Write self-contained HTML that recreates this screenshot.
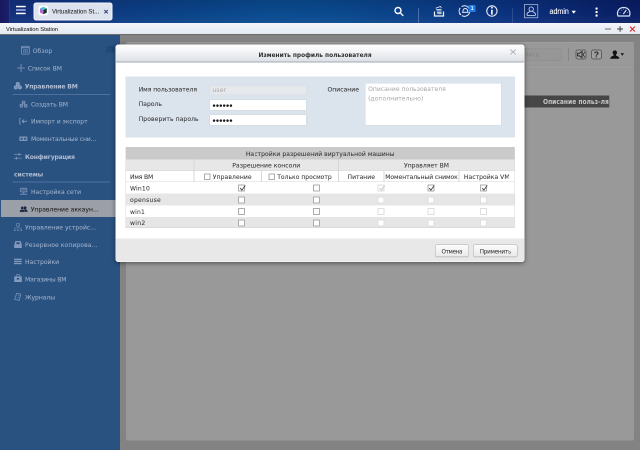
<!DOCTYPE html>
<html lang="ru">
<head>
<meta charset="utf-8">
<title>Virtualization Station</title>
<style>
html,body{margin:0;padding:0;}
body{width:640px;height:450px;overflow:hidden;position:relative;background:#838383;}
#app{position:absolute;left:0;top:0;width:1280px;height:900px;overflow:hidden;will-change:transform;transform:scale(0.5);transform-origin:0 0;background:#838383;font-family:"DejaVu Sans","Liberation Sans",sans-serif;font-size:12px;color:#3e3e3e;-webkit-text-stroke:0.1px;}
*{box-sizing:border-box;}
svg{position:absolute;overflow:visible;}
/* top bar */
#topbar{position:absolute;left:0;top:0;width:1280px;height:45.6px;background:linear-gradient(rgba(0,0,20,.12),rgba(0,0,0,0) 60%,rgba(255,255,255,.04)),linear-gradient(90deg,#14307c 0%,#12327e 6%,#0d3c83 18%,#0a4489 30%,#0a4b8f 42%,#0a4a8e 52%,#0b4289 62%,#0b3a84 70%,#0b317e 80%,#0a2770 90%,#0a1d64 100%);}
#corner{position:absolute;left:0;top:0;width:20px;height:45.6px;background:linear-gradient(90deg,#17175e,#1b2169);border-right:1px solid #3a4a96;}
#tab{position:absolute;left:67px;top:5px;width:158px;height:36px;border-radius:5px;background:#dde3ee;border:2px solid #f0f3f9;}
#tab span{position:absolute;left:35.4px;top:7.6px;white-space:nowrap;font-family:"Liberation Sans",sans-serif;font-size:12.8px;color:#222;}
.vsep{position:absolute;top:16px;width:1.6px;height:30px;background:rgba(150,170,220,.45);}
#admin{position:absolute;left:1099.4px;top:14px;font-family:"Liberation Sans",sans-serif;font-size:15.6px;color:#fff;white-space:nowrap;-webkit-text-stroke:0.2px #fff;}
#badge{position:absolute;left:937.2px;top:9.6px;width:14.2px;height:14.6px;background:#1e7be8;color:#eef4ff;font-family:"Liberation Sans",sans-serif;font-weight:bold;font-size:10.4px;line-height:14px;text-align:center;-webkit-text-stroke:0;}
/* title bar */
#titlebar{position:absolute;left:0;top:45.6px;width:1280px;height:24.4px;background:linear-gradient(#f3f6fa,#e4eaf2);border-bottom:2.4px solid #6c6c6c;}
#titlebar span{position:absolute;left:11.6px;top:5.8px;font-family:"Liberation Sans",sans-serif;font-size:11.6px;color:#222;white-space:nowrap;}
/* sidebar */
#sidebar{position:absolute;left:0;top:70px;width:240px;height:830px;background:#295280;}
.si{position:absolute;left:0;width:240px;height:30px;line-height:30px;color:#9fb0ca;white-space:nowrap;font-size:12.2px;}
.si span{position:absolute;top:0;}
.si.b{font-weight:bold;color:#b0bdd4;-webkit-text-stroke:0;}
#selrow{position:absolute;left:2px;top:330.2px;width:238px;height:33.8px;background:#9b9fa7;}
.sep{position:absolute;left:25.4px;width:195px;height:1.6px;background:#4d719f;}
/* main */
#mainpanel{position:absolute;left:252px;top:84.4px;width:1016px;height:798px;background:#999;border-radius:4px;border-bottom:2px solid #8e8e8e;border-top:1px solid #a3a3a3;}
#tbline{position:absolute;left:0;top:45.2px;width:100%;height:2px;background:#8f8f8f;border-bottom:1px solid #a0a0a0;}
#darkbar{position:absolute;left:0;top:105.6px;width:967.2px;height:23.6px;background:#464646;border-right:1.6px solid #6e6e6e;}
#darkbar span{position:absolute;left:834px;top:1.4px;line-height:24.8px;font-weight:bold;font-size:13.4px;color:#c6c6c6;white-space:nowrap;-webkit-text-stroke:0;}
.tbox{position:absolute;top:14px;height:20px;border:2px solid #5e5e5e;border-radius:4.8px;background:#a1a1a1;}
/* dialog */
#dlg{position:absolute;left:230.6px;top:88.6px;width:818.6px;height:435.6px;background:#fff;border-radius:6px;box-shadow:0 2px 10px rgba(0,0,0,.5);}
#dlg:after{content:"";position:absolute;left:0;top:0;right:0;bottom:0;border:1px solid rgba(255,255,255,.9);border-radius:6px;pointer-events:none;}
#dlgtitle{position:absolute;left:0;top:0;width:100%;height:36.8px;border-radius:6px 6px 0 0;background:linear-gradient(#ffffff,#f1f3f5 45%,#dce0e5);border-bottom:2px solid #a3a9b0;font-weight:bold;font-size:13px;line-height:39.2px;color:#303030;-webkit-text-stroke:0;}
#dlgfoot{position:absolute;left:0;top:388px;width:100%;height:47.6px;border-radius:0 0 6px 6px;background:#e8e8e8;}
.btn{position:absolute;top:12px;height:25.2px;border:1.6px solid #adadad;border-radius:4px;background:linear-gradient(#fcfcfc,#e9e9e9);text-align:center;line-height:26px;font-size:11.4px;color:#3a3a3a;box-shadow:0 1px 1px rgba(0,0,0,.12);}
#form{position:absolute;left:20.4px;top:64px;width:778.6px;height:122.8px;background:#dbe3ec;}
.lbl{position:absolute;font-size:12.1px;color:#333;white-space:nowrap;line-height:20px;}
.inp{position:absolute;left:167.6px;width:194.4px;height:21.6px;background:#fff;font-size:12px;line-height:20px;padding-left:5.2px;color:#111;border:1.2px solid #cfd6de;border-radius:2px;white-space:nowrap;}
.inp .pw{font-size:6.6px;letter-spacing:1px;position:absolute;left:5.6px;top:0.8px;color:#1c1c1c;-webkit-text-stroke:0;}
.inp.dis{background:#e6e9ec;color:#aaa;border-color:#d8dde3;height:19.2px;line-height:16.4px;}
#ta{position:absolute;left:479px;top:13px;width:273px;height:85px;background:#fff;border:1px solid #d3d9e0;color:#a6a6a6;font-size:12.1px;line-height:19.5px;padding:2.4px 5.2px;white-space:nowrap;-webkit-text-stroke:0;}
/* table */
#tbl{position:absolute;left:20.4px;top:207px;width:778.8px;height:160.4px;font-size:12.1px;color:#333;background:#fff;}
.row{position:absolute;left:0;width:778.8px;padding-top:1.2px;}
.c{position:absolute;top:1.2px;height:100%;white-space:nowrap;text-align:center;}
.vl{position:absolute;width:1.4px;background:#d6d6d6;}
.cb{position:absolute;width:14px;height:14px;border:2px solid #ababab;background:#fff;border-radius:1.2px;}
.cb.f{border-color:#dedede;}
</style>
</head>
<body>
<div id="app">
<div id="topbar">
  <div id="corner"></div>
  <div id="tab"><span style="transform:scaleX(0.9501);transform-origin:0 50%;">Virtualization St...</span></div>
  <div class="vsep" style="left:836.4px"></div>
  <div class="vsep" style="left:1024.8px"></div>
  <div id="admin" style="transform:scaleX(0.9133);transform-origin:0 50%;">admin</div>
  <svg id="topsvg" style="left:0;top:0" width="1280" height="46" viewBox="0 0 640 23">
    <!-- hamburger -->
    <rect x="16" y="5.8" width="9.7" height="1.5" fill="#fff"/>
    <rect x="16" y="9.25" width="9.7" height="1.5" fill="#a9b4f0"/>
    <rect x="16" y="12.7" width="9.7" height="1.5" fill="#fff"/>
    <!-- tab icon -->
    <rect x="38.6" y="5.6" width="9.6" height="9.8" rx="2" fill="#fdfdfd"/>
    <polygon points="43.4,6.9 46.8,8.4 43.4,10 40,8.4" fill="#35c6d8"/>
    <polygon points="40,8.4 43.4,10 43.4,14.2 40,12.6" fill="#b06bd0"/>
    <polygon points="46.8,8.4 43.4,10 43.4,14.2 46.8,12.6" fill="#16352a"/>
    <!-- tab close -->
    <path d="M104.4 10 L107.8 13.4 M107.8 10 L104.4 13.4" stroke="#364a7c" stroke-width="1.15" fill="none"/>
    <!-- search -->
    <circle cx="398" cy="10.5" r="3" fill="none" stroke="#fff" stroke-width="1.4"/>
    <path d="M400.6 13.1 L402.9 15.5" stroke="#eef2fb" stroke-width="1.4" stroke-linecap="round"/>
    <!-- stack/tray -->
    <path d="M434.5 11.5 V16 H443.5 V11.5" fill="none" stroke="#eef1fa" stroke-width="1.25"/>
    <path d="M437.4 13.7 H441.6 M437 12.3 H441.6 M436.6 10.9 H441.6 M436.2 9.5 L441.5 9.3 M435.6 8.2 L440.4 6.5 L441.5 7.9" fill="none" stroke="#e6ebf8" stroke-width="0.8"/>
    <!-- refresh circle with bell -->
    <path d="M461.6 6.6 A5.3 5.3 0 1 1 461.8 15.6" fill="none" stroke="#e4e9f6" stroke-width="1.05"/>
    <path d="M460.2 14.2 A5.3 5.3 0 0 1 460.2 7.8" fill="none" stroke="#e4e9f6" stroke-width="1.05"/>
    <circle cx="460.3" cy="14.3" r="0.8" fill="#fff"/>
    <path d="M462 12.3 H468.6" fill="none" stroke="#e4e9f6" stroke-width="1"/>
    <path d="M462.9 12 C462.9 10.2 463.3 8.5 465.3 8.5 C467.3 8.5 467.7 10.2 467.7 12" fill="none" stroke="#e4e9f6" stroke-width="0.9"/>
    <!-- info -->
    <circle cx="491.9" cy="11" r="5.15" fill="none" stroke="#e4e9f6" stroke-width="1.1"/>
    <rect x="491.1" y="9.7" width="1.6" height="4.9" fill="#fff"/>
    <rect x="491.1" y="6.8" width="1.6" height="1.7" fill="#fff"/>
    <!-- user box -->
    <rect x="524.4" y="4.5" width="13.4" height="13.3" fill="none" stroke="#b9c5e2" stroke-width="0.7"/>
    <circle cx="531.2" cy="9.1" r="2.2" fill="none" stroke="#dfe5f5" stroke-width="0.8"/>
    <path d="M527 15.4 V14.2 C527 12.6 529 12.2 530 11.4 M535.4 15.4 V14.2 C535.4 12.6 533.4 12.2 532.4 11.4 M527 15.4 H535.4" fill="none" stroke="#dfe5f5" stroke-width="0.8"/>
    <!-- caret -->
    <polygon points="571.6,10.7 575.9,10.7 573.75,13.7" fill="#fff"/>
    <!-- dots -->
    <rect x="595.5" y="7.5" width="2.1" height="2.1" rx="0.6" fill="#fff"/>
    <rect x="595.5" y="11" width="2.1" height="2.1" rx="0.6" fill="#fff"/>
    <rect x="595.5" y="14.5" width="2.1" height="2.1" rx="0.6" fill="#fff"/>
    <!-- gauge -->
    <path d="M618 16 C616.4 12 618.6 7.5 623.7 7.5 C628.8 7.5 631 12 629.4 16 Z" fill="none" stroke="#dde3f4" stroke-width="1.2"/>
    <path d="M623.3 14 L626.3 10" stroke="#dde3f4" stroke-width="1.1"/>
    <path d="M619.6 12.6 L620.6 12.9 M621.2 9.8 L621.9 10.5 M623.7 8.8 V9.6 M627.8 12.6 L626.9 12.9" stroke="#cfd6ee" stroke-width="0.6"/>
  </svg>
  <div id="badge">1</div>
</div>
<div id="titlebar"><span style="transform:scaleX(0.9878);transform-origin:0 50%;">Virtualization Station</span>
  <svg style="left:0;top:0" width="1280" height="24" viewBox="0 22.8 640 12">
    <rect x="605" y="28.2" width="6" height="1.2" fill="#838383"/>
    <path d="M617.2 28.8 H623 M620.1 26 V31.6" stroke="#585858" stroke-width="1.2"/>
    <path d="M630 26.4 L634.9 31.3 M634.9 26.4 L630 31.3" stroke="#d62a2a" stroke-width="1.15"/>
  </svg>
</div>
<div id="sidebar">
  <div id="selrow"></div>
  <div class="sep" style="top:118px"></div>
  <div class="sep" style="top:293.2px"></div>
  <div class="si" style="top:16.6px"><span style="letter-spacing:0.08px;left:65.4px">Обзор</span></div>
  <div class="si" style="top:51.8px"><span style="letter-spacing:-0.008px;left:55.4px">Список ВМ</span></div>
  <div class="si b" style="top:87.8px"><span style="letter-spacing:-0.366px;left:49.4px">Управление ВМ</span></div>
  <div class="si" style="top:123.8px"><span style="letter-spacing:-0.138px;left:62px">Создать ВМ</span></div>
  <div class="si" style="top:158.4px"><span style="letter-spacing:-0.13px;left:62px">Импорт и экспорт</span></div>
  <div class="si" style="top:193.2px"><span style="letter-spacing:-0.282px;left:62px">Моментальные сни...</span></div>
  <div class="si b" style="top:228.6px"><span style="letter-spacing:-0.388px;left:50px">Конфигурация</span></div>
  <div class="si b" style="top:264.4px"><span style="letter-spacing:-0.188px;left:28px">системы</span></div>
  <div class="si" style="top:299.2px"><span style="letter-spacing:-0.106px;left:62px">Настройка сети</span></div>
  <div class="si" style="top:334.4px;color:#1c1c1c"><span style="letter-spacing:-0.04px;left:61.4px">Управление аккаун...</span></div>
  <div class="si" style="top:370.4px"><span style="letter-spacing:-0.038px;left:50px">Управление устройс...</span></div>
  <div class="si" style="top:404.6px"><span style="letter-spacing:0.108px;left:50px">Резервное копирова...</span></div>
  <div class="si" style="top:439.2px"><span style="letter-spacing:-0.094px;left:50px">Настройки</span></div>
  <div class="si" style="top:474.4px"><span style="letter-spacing:-0.364px;left:50px">Магазины ВМ</span></div>
  <div class="si" style="top:509.8px"><span style="letter-spacing:-0.134px;left:50px">Журналы</span></div>
  <svg style="left:0;top:0" width="240" height="830" viewBox="0 35 120 415" fill="none" stroke="#8198bd" stroke-width="0.8">
    <!-- collapse btn -->
    <rect x="106.5" y="46" width="8" height="6.5" fill="#1f4677" stroke="none"/>
    <path d="M108 46.6 V52 M110.2 46.6 V52" stroke="#2a5283" stroke-width="0.7"/>
    <!-- overview -->
    <rect x="21.4" y="46.3" width="7.9" height="7.8" rx="1" stroke-width="0.75"/>
    <path d="M21.4 47.7 H29.3" stroke-width="1"/>
    <path d="M23.3 49.6 H27.5 V52.4 H23.3 Z M25.4 49.6 V52.4 M23.3 51 H27.5" stroke-width="0.45"/>
    <!-- plus -->
    <path d="M17 68 H25 M21 64 V72" stroke-width="0.8" stroke="#8298bd"/>
    <!-- trio filled -->
    <g fill="#7891b7" stroke="#9fb1cf" stroke-width="0.5">
      <circle cx="17.8" cy="84" r="1.8"/><circle cx="15.8" cy="87.4" r="1.8"/><circle cx="19.9" cy="87.4" r="1.8"/>
    </g>
    <!-- trio hollow -->
    <g stroke-width="0.8" fill="#4a6c9c"><circle cx="23.5" cy="102.4" r="1.4"/><circle cx="21.3" cy="105.7" r="1.4"/><circle cx="25.7" cy="105.7" r="1.4"/></g>
    <!-- import/export -->
    <path d="M21.2 118.6 H19.8 V124 H21.2"/>
    <path d="M27.2 121.3 H22.2 M24 119.6 L22.2 121.3 L24 123" stroke-width="0.9"/>
    <!-- snapshots -->
    <rect x="19.4" y="136.5" width="8" height="4.5" rx="0.5" fill="#7f96bb" stroke="none"/>
    <rect x="20.5" y="137.7" width="2.3" height="2.1" fill="#3a5f8e" stroke="none"/>
    <rect x="24" y="137.7" width="2.3" height="2.1" fill="#3a5f8e" stroke="none"/>
    <!-- config sliders -->
    <path d="M14 154.3 H21.7 M14 158.2 H21.7" stroke-width="0.7"/>
    <path d="M19 153 V155.6 M16.4 156.9 V159.5" stroke-width="1"/>
    <!-- network -->
    <rect x="20.6" y="188.3" width="6.2" height="3.6" rx="0.5"/>
    <path d="M21.6 189.5 H25.8 M21.6 190.7 H25.8" stroke-width="0.4"/>
    <path d="M23.7 191.9 V193.6 M20.2 194.2 H27.2" stroke-width="0.8"/>
    <!-- users (dark) -->
    <g fill="#1a2442" stroke="none">
      <circle cx="25" cy="207.9" r="1.5"/>
      <path d="M22.4 211.9 C22.4 209.8 23.6 209.4 25 209.4 C26.4 209.4 27.5 209.8 27.5 211.9 Z"/>
      <circle cx="22.3" cy="208" r="1.6" stroke="#9b9fa7" stroke-width="0.4"/>
      <path d="M19.6 212.1 C19.6 209.9 20.8 209.5 22.3 209.5 C23.8 209.5 25 209.9 25 212.1 Z" stroke="#9b9fa7" stroke-width="0.4"/>
    </g>
    <!-- devices org chart -->
    <rect x="16.6" y="223.6" width="2.8" height="2.4" stroke-width="0.6" stroke="#7a93bb"/>
    <path d="M18 226 V228 M14.8 229.4 V228 H21.2 V229.4" stroke-width="0.5" stroke="#7a93bb"/>
    <g fill="#7a93bb" stroke="none"><rect x="14.1" y="229.6" width="1.4" height="1.4"/><rect x="17.3" y="229.6" width="1.4" height="1.4"/><rect x="20.5" y="229.6" width="1.4" height="1.4"/></g>
    <!-- backup drive -->
    <path d="M15.4 241 H20.6 L21.8 245 V248 H14.2 V245 Z" fill="#8399bd" stroke="none"/>
    <rect x="16.4" y="242.2" width="3.2" height="2" fill="#295280" stroke="none"/>
    <!-- settings bars -->
    <g fill="#8399bd" stroke="none"><rect x="14" y="258.7" width="7.6" height="1.3"/><rect x="14" y="260.8" width="7.6" height="1.3"/><rect x="14" y="262.9" width="7.6" height="1.3"/></g>
    <!-- bag -->
    <rect x="14.2" y="276.4" width="7.6" height="5.6" fill="#8399bd" stroke="none"/>
    <path d="M16.2 276.4 V275.4 C16.2 274.2 19.8 274.2 19.8 275.4 V276.4" stroke-width="0.7"/>
    <rect x="16.8" y="278" width="2.4" height="1.6" fill="#295280" stroke="none"/>
    <!-- logs -->
    <path d="M16.6 293.4 L20.8 294.2 L19.2 300.4 L14.6 299.4 Z" stroke-width="0.7"/>
    <path d="M17.2 295.4 L19.6 295.9 M16.8 297 L19.2 297.5" stroke-width="0.4"/>
  </svg>
</div>
<div id="mainpanel">
  <div id="tbline"></div>
  <div id="darkbar"><span style="transform:scaleX(0.8901);transform-origin:0 50%;">Описание польз-ля</span></div>
  <div style="position:absolute;left:728px;top:11.2px;width:143px;height:25.2px;border:1.6px solid #8b8b8b;border-radius:4px;background:#969696;color:#868686;font-size:11.6px;line-height:22.8px;text-align:right;padding-right:44px;">Удалить</div>
  <div style="position:absolute;left:884.4px;top:9.6px;width:1.6px;height:27.2px;background:#858585"></div>
  <div class="tbox" style="left:898.6px;width:22.4px"></div>
  <div class="tbox" style="left:930px;width:22px"><span style="position:absolute;left:0;top:0;width:100%;text-align:center;font-family:'Liberation Sans',sans-serif;font-weight:bold;font-size:16.8px;line-height:17.6px;color:#222;-webkit-text-stroke:0">?</span></div>
  <svg style="left:0;top:0" width="1016" height="60" viewBox="126 42.2 508 30">
    <!-- speaker -->
    <path d="M577.6 53 H579.4 L582 51.2 V57.4 L579.4 55.6 H577.6 Z" fill="none" stroke="#2a2a2a" stroke-width="1"/>
    <path d="M584.9 51.6 L583 54.3 L584.9 57" fill="none" stroke="#2a2a2a" stroke-width="0.8"/>
    <!-- user -->
    <circle cx="614.8" cy="52.3" r="2.2" fill="#111"/>
    <path d="M610.3 58.4 C610.3 56.2 612.4 56 613.6 55.2 V54 H616 V55.2 C617.2 56 619.3 56.2 619.3 58.4 Z" fill="#111"/>
    <polygon points="620.6,53 624,53 622.3,55.4" fill="#111"/>
  </svg>
</div>
<div id="dlg">
  <div id="dlgtitle"><span style="transform:scaleX(0.9008);transform-origin:0 50%;position:absolute;left:286.4px;top:1.4px;white-space:nowrap;">Изменить профиль пользователя</span></div>
  <svg style="left:787px;top:8px" width="16" height="16" viewBox="0 0 8 8"><path d="M1.3 0.9 L6.7 5.9 M6.7 0.9 L1.3 5.9" stroke="#a9adb2" stroke-width="0.9" fill="none"/></svg>
  <div id="form">
    <div class="lbl" style="letter-spacing:-0.05px;left:26.4px;top:16px">Имя пользователя</div>
    <div class="lbl" style="letter-spacing:0.008px;left:26.4px;top:45px">Пароль</div>
    <div class="lbl" style="letter-spacing:0.154px;left:26.4px;top:75px">Проверить пароль</div>
    <div class="inp dis" style="top:18px"><span style="letter-spacing:0.454px;">user</span></div>
    <div class="inp" style="top:46.6px"><span class="pw">●●●●●●</span></div>
    <div class="inp" style="top:76.6px"><span class="pw">●●●●●●</span></div>
    <div class="lbl" style="letter-spacing:0.054px;left:404px;top:16px">Описание</div>
    <div id="ta"><span style="letter-spacing:0.052px;">Описание пользователя</span><br><span style="letter-spacing:0.122px;">(дополнительно)</span></div>
  </div>
  <div id="tbl">
    <div class="row" style="top:-1.2px;height:24.2px;background:#cacaca;line-height:24.4px;text-align:center;"><span style="letter-spacing:0.094px;">Настройки разрешений виртуальной машины</span></div>
    <div class="row" style="top:23px;height:23px;background:#e7e7e7;line-height:23.2px;">
      <div class="c" style="left:137px;width:289px"><span style="letter-spacing:0.108px;">Разрешение консоли</span></div>
      <div class="c" style="left:426px;width:352px"><span style="letter-spacing:0.036px;">Управляет ВМ</span></div>
    </div>
    <div class="row" style="top:46px;height:22px;background:#fff;line-height:22.8px;">
      <div class="c" style="left:9px;text-align:left"><span style="letter-spacing:-0.338px;">Имя ВМ</span></div>
      <div class="c" style="left:137px;width:135px;padding-left:18px"><span style="letter-spacing:0.212px;">Управление</span></div>
      <div class="c" style="left:272px;width:154px;padding-left:18px"><span style="letter-spacing:-0.006px;">Только просмотр</span></div>
      <div class="c" style="left:426px;width:91px"><span style="letter-spacing:0.054px;">Питание</span></div>
      <div class="c" style="left:517px;width:150px"><span style="letter-spacing:-0.106px;">Моментальный снимок</span></div>
      <div class="c" style="left:667px;width:111px"><span style="letter-spacing:0.092px;">Настройка VM</span></div>
      <div class="cb" style="left:157px;top:5.2px;width:12.8px;height:12.8px"></div>
      <div class="cb" style="left:286.2px;top:5.2px;width:12.8px;height:12.8px"></div>
    </div>
    <div class="row dr" style="top:68px;height:23px;background:#fff;line-height:24px;"><div class="c" style="left:9px"><span style="letter-spacing:0.378px;">Win10</span></div></div>
    <div class="row dr" style="top:91px;height:24px;background:#e6e6e6;line-height:24px;"><div class="c" style="left:9px"><span style="letter-spacing:0.514px;">opensuse</span></div></div>
    <div class="row dr" style="top:115px;height:23px;background:#fff;line-height:24px;"><div class="c" style="left:9px"><span style="letter-spacing:0.344px;">win1</span></div></div>
    <div class="row dr" style="top:138px;height:22.4px;background:#e6e6e6;line-height:23.2px;"><div class="c" style="left:9px"><span style="letter-spacing:0.594px;">win2</span></div></div>
    <!-- header grid lines -->
    <div class="vl" style="left:136.4px;top:23px;height:45px"></div>
    <div class="vl" style="left:271.4px;top:46px;height:22px"></div>
    <div class="vl" style="left:425.4px;top:23px;height:45px"></div>
    <div class="vl" style="left:516.4px;top:46px;height:22px"></div>
    <div class="vl" style="left:666.4px;top:46px;height:22px"></div>
    <div class="vl" style="left:0;top:-1.2px;height:161.6px;background:#d9d9d9"></div>
    <div class="vl" style="left:777.6px;top:-1.2px;height:161.6px;background:#d9d9d9"></div>
    <div style="position:absolute;left:0;top:45.4px;width:778px;height:1.4px;background:#d6d6d6"></div>
    <div style="position:absolute;left:0;top:67.4px;width:778px;height:1.4px;background:#d6d6d6"></div>
    <div style="position:absolute;left:0;top:159.4px;width:778px;height:1.4px;background:#d0d0d0"></div>
    <div class="cb" style="left:225.4px;top:73.6px"><svg style="left:-0.8px;top:-2.4px" width="14" height="14" viewBox="0 0 7 7"><path d="M1.2 3.6 L2.9 5.6 L6.3 0.9" fill="none" stroke="#444" stroke-width="0.9"/></svg></div>
    <div class="cb" style="left:375.4px;top:73.6px"></div>
    <div class="cb f" style="left:504.4px;top:73.6px"><svg style="left:-0.8px;top:-2.4px" width="14" height="14" viewBox="0 0 7 7"><path d="M1.2 3.6 L2.9 5.6 L6.3 0.9" fill="none" stroke="#c4c4c4" stroke-width="0.9"/></svg></div>
    <div class="cb" style="left:603.8px;top:73.6px"><svg style="left:-0.8px;top:-2.4px" width="14" height="14" viewBox="0 0 7 7"><path d="M1.2 3.6 L2.9 5.6 L6.3 0.9" fill="none" stroke="#444" stroke-width="0.9"/></svg></div>
    <div class="cb" style="left:709.4px;top:73.6px"><svg style="left:-0.8px;top:-2.4px" width="14" height="14" viewBox="0 0 7 7"><path d="M1.2 3.6 L2.9 5.6 L6.3 0.9" fill="none" stroke="#444" stroke-width="0.9"/></svg></div>
    <div class="cb" style="left:225.4px;top:97.2px"></div>
    <div class="cb" style="left:375.4px;top:97.2px"></div>
    <div class="cb f" style="left:504.4px;top:97.2px"></div>
    <div class="cb f" style="left:603.8px;top:97.2px"></div>
    <div class="cb f" style="left:709.4px;top:97.2px"></div>
    <div class="cb" style="left:225.4px;top:120.6px"></div>
    <div class="cb" style="left:375.4px;top:120.6px"></div>
    <div class="cb f" style="left:504.4px;top:120.6px"></div>
    <div class="cb f" style="left:603.8px;top:120.6px"></div>
    <div class="cb f" style="left:709.4px;top:120.6px"></div>
    <div class="cb" style="left:225.4px;top:143.4px"></div>
    <div class="cb" style="left:375.4px;top:143.4px"></div>
    <div class="cb f" style="left:504.4px;top:143.4px"></div>
    <div class="cb f" style="left:603.8px;top:143.4px"></div>
    <div class="cb f" style="left:709.4px;top:143.4px"></div>
  </div>
  <div id="dlgfoot">
    <div class="btn" style="left:639px;width:68px;"><span style="letter-spacing:-0.74px;">Отмена</span></div>
    <div class="btn" style="left:715.6px;width:89.2px;"><span style="letter-spacing:-0.488px;">Применить</span></div>
  </div>
</div>
</div>
</body>
</html>
